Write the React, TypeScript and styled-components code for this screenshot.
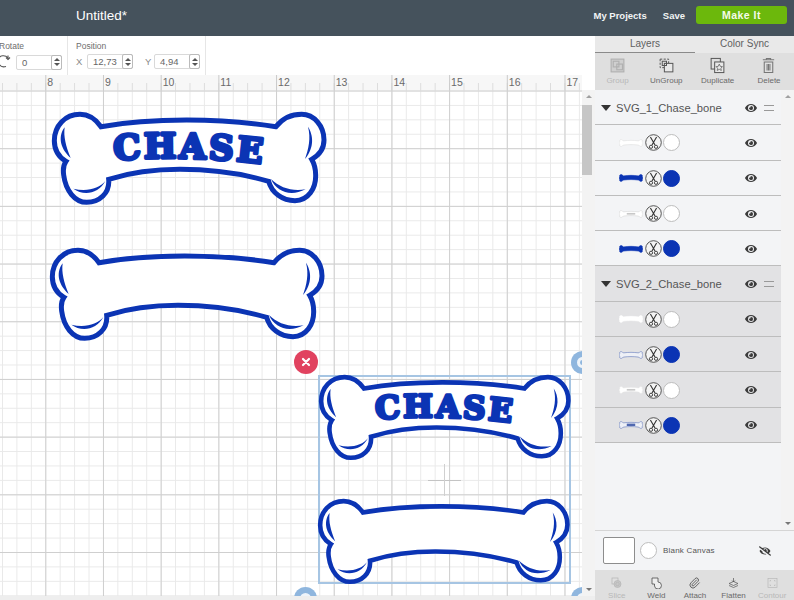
import { ReactNode } from "react"
import styled, { createGlobalStyle } from "styled-components"
import { FaEye, FaEyeSlash } from "react-icons/fa"
import { Paperclip } from "lucide-react"

const BLUE = "#0b34b4"

const GlobalStyle = createGlobalStyle`
  html, body {
    margin: 0;
    padding: 0;
    width: 794px;
    height: 600px;
    overflow: hidden;
    background: #fff;
    font-family: "Liberation Sans", Arial, sans-serif;
  }
`

const Page = styled.div`
  width: 794px;
  height: 600px;
  display: flex;
  flex-direction: column;
  overflow: hidden;
`

const TopBar = styled.header`
  height: 36px;
  flex: none;
  background: #45525c;
  display: flex;
  align-items: center;
  color: #fff;
  padding: 0 7px 0 76px;
`

const Title = styled.div`
  font-size: 13.5px;
  flex: 1;
  margin-top: -6px;
`

const TopLink = styled.a<{ $gap: number }>`
  font-size: 9.5px;
  font-weight: 700;
  color: #f2f4f5;
  margin-right: ${(p) => p.$gap}px;
  margin-top: -6px;
`

const MakeIt = styled.button`
  width: 91px;
  height: 18px;
  margin-top: -6px;
  border: 0;
  border-radius: 3px;
  background: #6cb80c;
  color: #f4fbe8;
  font: 700 10.5px "Liberation Sans", Arial, sans-serif;
  letter-spacing: 0.5px;
  padding: 0;
`

const Body = styled.div`
  flex: 1;
  display: flex;
  min-height: 0;
`

const Workspace = styled.main`
  width: 595px;
  flex: none;
  display: flex;
  flex-direction: column;
  min-width: 0;
`

const OptionBar = styled.div`
  height: 39px;
  flex: none;
  display: flex;
  background: #fff;
`

const OptionGroup = styled.div<{ $width: number; $pad: number }>`
  width: ${(p) => p.$width}px;
  box-sizing: border-box;
  padding: 5px 0 0 ${(p) => p.$pad}px;
  border-right: 1px solid #e6e6e6;
`

const OptionLabel = styled.div<{ $shift?: number }>`
  font-size: 8.5px;
  color: #6d6d6d;
  height: 12px;
  margin-left: ${(p) => p.$shift ?? 0}px;
`

const OptionRow = styled.div`
  display: flex;
  align-items: center;
  margin-top: 1px;
`

const AxisLabel = styled.span<{ $width: number }>`
  width: ${(p) => p.$width}px;
  font-size: 9.5px;
  color: #8a8a8a;
`

const NumberBox = styled.div<{ $width: number; $gap: number }>`
  width: ${(p) => p.$width}px;
  height: 15px;
  box-sizing: border-box;
  border: 1px solid #d9d9d9;
  border-radius: 2px;
  margin-right: ${(p) => p.$gap}px;
  display: flex;
  align-items: center;
  justify-content: space-between;
  padding-left: 5px;
  font-size: 9.5px;
  color: #666;
`

const Spinner = styled.div`
  width: 11px;
  height: 15px;
  flex: none;
  box-sizing: border-box;
  border: 1px solid #bbb;
  border-radius: 2px;
  margin-right: -1px;
  display: flex;
  flex-direction: column;
  align-items: center;
  justify-content: center;
  gap: 2px;
  &::before,
  &::after {
    content: "";
    border-left: 3px solid transparent;
    border-right: 3px solid transparent;
  }
  &::before {
    border-bottom: 3px solid #555;
  }
  &::after {
    border-top: 3px solid #555;
  }
`

const Ruler = styled.div`
  height: 15px;
  flex: none;
  width: 582px;
  box-sizing: border-box;
  padding-left: 45.3px;
  display: flex;
  overflow: hidden;
  background-color: #f7f7f7;
  background-image:
    linear-gradient(to right, #cacaca 1px, transparent 1px),
    linear-gradient(to right, #dcdcdc 1px, transparent 1px);
  background-size: 57.7px 100%, 14.425px 7px;
  background-position: 45.3px 0, 2px 100%;
  background-repeat: repeat-x;
`

const RulerMark = styled.span`
  width: 57.7px;
  flex: none;
  box-sizing: border-box;
  padding: 1px 0 0 2px;
  font-size: 10.5px;
  line-height: 12px;
  color: #6a6a6a;
`

const CanvasRow = styled.div`
  flex: 1;
  display: flex;
  min-height: 0;
`

const Canvas = styled.div`
  position: relative;
  width: 582px;
  overflow: hidden;
  background-color: #fff;
  background-image:
    linear-gradient(to right, #cfcfcf 1px, transparent 1px),
    linear-gradient(to bottom, #cfcfcf 1px, transparent 1px),
    linear-gradient(to right, #e9e9e9 1px, transparent 1px),
    linear-gradient(to bottom, #e9e9e9 1px, transparent 1px);
  background-size: 57.7px 57.7px, 57.7px 57.7px, 14.425px 14.425px, 14.425px 14.425px;
  background-position: 45.3px 0, 0 0.5px, 2px 0, 0 0.5px;
`

const ScrollBar = styled.div<{ $width: number }>`
  width: ${(p) => p.$width}px;
  flex: none;
  background: #f3f3f3;
  display: flex;
  flex-direction: column;
  align-items: center;
  padding: 5px 0;
  box-sizing: border-box;
`

const ScrollUp = styled.div`
  border-left: 3px solid transparent;
  border-right: 3px solid transparent;
  border-bottom: 3px solid #a0a0a0;
`

const ScrollDown = styled.div`
  border-left: 3px solid transparent;
  border-right: 3px solid transparent;
  border-top: 3px solid #777;
  margin-top: auto;
`

const ScrollThumb = styled.div`
  width: 10px;
  height: 70px;
  margin: 7px 3px 0 0;
  background: #c6c6c6;
`

const BottomScroll = styled.div`
  height: 4px;
  flex: none;
  background: #eeeeee;
`

const BoneSvg = styled.svg<{ $x: number; $y: number; $scale: number }>`
  position: absolute;
  left: ${(p) => p.$x}px;
  top: ${(p) => p.$y}px;
  width: ${(p) => 300 * p.$scale}px;
  height: ${(p) => 120 * p.$scale}px;
`

const Selection = styled.div`
  position: absolute;
  left: 318px;
  top: 285px;
  width: 253px;
  height: 209px;
  box-sizing: border-box;
  border: 2px solid #a6c5e3;
`

const CrossH = styled.div`
  position: absolute;
  left: 428px;
  top: 389.5px;
  width: 33px;
  height: 1px;
  background: #c4c4c4;
`

const CrossV = styled.div`
  position: absolute;
  left: 444px;
  top: 374px;
  width: 1px;
  height: 32px;
  background: #d0d0d0;
`

const DeleteBadge = styled.div`
  position: absolute;
  left: 294px;
  top: 260px;
  width: 24px;
  height: 24px;
  border-radius: 50%;
  background: #e1425f;
  color: #fff;
  display: flex;
  align-items: center;
  justify-content: center;
`

const Handle = styled.div<{ $x: number; $y: number }>`
  position: absolute;
  left: ${(p) => p.$x}px;
  top: ${(p) => p.$y}px;
  width: 23px;
  height: 23px;
  border-radius: 50%;
  background: #8fb6de;
  &::after {
    content: "";
    position: absolute;
    left: 6px;
    top: 6px;
    width: 5px;
    height: 5px;
    border: 3px solid #eef4fa;
    border-radius: 50%;
  }
`

const Panel = styled.aside`
  width: 199px;
  flex: none;
  display: flex;
  flex-direction: column;
  background: #f3f4f6;
`

const Tabs = styled.div`
  height: 17px;
  flex: none;
  display: flex;
  background: #e9e9e9;
  border-bottom: 1px solid #cfcfcf;
  box-sizing: content-box;
  margin-bottom: -1px;
`

const Tab = styled.div<{ $active?: boolean; $width: number }>`
  width: ${(p) => p.$width}px;
  text-align: center;
  font-size: 10px;
  line-height: 16px;
  color: #606060;
  box-sizing: border-box;
  height: 18px;
  border-bottom: 2px solid ${(p) => (p.$active ? "#8a8a8a" : "transparent")};
`

const ToolStrip = styled.div<{ $height: number; $top: number; $inset: number }>`
  height: ${(p) => p.$height}px;
  flex: none;
  display: flex;
  justify-content: space-between;
  background: #dfdfdf;
  box-sizing: border-box;
  padding: ${(p) => p.$top}px ${(p) => p.$inset}px 0 0;
  overflow: hidden;
`

const Tool = styled.div<{ $disabled?: boolean; $width: number }>`
  width: ${(p) => p.$width}px;
  display: flex;
  flex-direction: column;
  align-items: center;
  padding-top: 4px;
  font-size: 8px;
  line-height: 9px;
  color: ${(p) => (p.$disabled ? "#b8b8b8" : "#6a6a6a")};
  svg {
    display: block;
    width: 17px;
    height: 17px;
    margin-bottom: 2px;
  }
`

const ListArea = styled.div`
  flex: 1;
  display: flex;
  min-height: 0;
`

const LayerList = styled.div`
  width: 186px;
  flex: none;
`

const GroupHead = styled.div<{ $shaded?: boolean }>`
  height: 35.3px;
  box-sizing: border-box;
  display: flex;
  align-items: center;
  padding: 1px 0 0 6px;
  border-bottom: 1px solid #bdbdbd;
  background: ${(p) => (p.$shaded ? "#e2e2e4" : "#f3f4f6")};
  color: #555;
  font-size: 11.2px;
`

const Caret = styled.span`
  border-left: 5.5px solid transparent;
  border-right: 5.5px solid transparent;
  border-top: 6px solid #333;
  margin-right: 5px;
`

const GroupName = styled.span`
  flex: 1;
`

const EyeSlot = styled.span<{ $right: number }>`
  display: flex;
  color: #3c3c3c;
  font-size: 12px;
  margin-right: ${(p) => p.$right}px;
`

const Grip = styled.span`
  width: 10px;
  height: 4px;
  border-top: 1px solid #999;
  border-bottom: 1px solid #999;
  margin-right: 7px;
`

const LayerRow = styled.div<{ $shaded?: boolean }>`
  height: 35.3px;
  box-sizing: border-box;
  display: flex;
  align-items: center;
  padding: 1px 0 0 24px;
  border-bottom: 1px solid #bdbdbd;
  background: ${(p) => (p.$shaded ? "#e2e2e4" : "#f3f4f6")};
`

const Thumb = styled.svg`
  width: 24px;
  height: 12px;
  flex: none;
  margin-right: 2px;
`

const CutIcon = styled.svg`
  width: 17px;
  height: 17px;
  flex: none;
  margin-right: 1px;
`

const Swatch = styled.span<{ $color: string; $size: number }>`
  width: ${(p) => p.$size}px;
  height: ${(p) => p.$size}px;
  box-sizing: border-box;
  border-radius: 50%;
  flex: none;
  background: ${(p) => p.$color};
  border: 1px solid ${(p) => (p.$color === "#fff" ? "#bdbdbd" : p.$color)};
`

const RowEye = styled(EyeSlot)`
  margin-left: auto;
`

const BlankCanvas = styled.div`
  height: 40px;
  flex: none;
  box-sizing: border-box;
  display: flex;
  align-items: center;
  padding: 0 23px 0 8px;
  background: #f3f4f6;
  border-top: 1px solid #d5d5d5;
`

const BlankSquare = styled.div`
  width: 32px;
  height: 27px;
  box-sizing: border-box;
  background: #fff;
  border: 1px solid #8d8d8d;
  border-radius: 2px;
  margin-right: 5px;
`

const BlankLabel = styled.span`
  font-size: 8px;
  color: #555;
  margin-left: 6px;
  flex: 1;
  letter-spacing: 0.2px;
`

const BONE_PATH =
  "M183 80 C165 55 145 43 120 43 C75 43 43 78 43 122 C43 148 55 170 78 184 C70 195 69 210 71 225 C77 272 105 307 140 307 C178 307 210 280 206 238 C270 218 340 208 420 208 C520 208 610 222 686 244 C695 278 727 302 765 302 C805 302 828 265 827 225 C827 208 823 192 815 178 C838 165 852 145 852 120 C852 78 822 43 785 43 C755 43 728 55 708 80 C620 66 520 60 440 60 C350 60 260 66 183 80 Z"

const CRESCENTS = [
  "M74 82 C56 105 56 142 92 174 C78 140 70 110 74 82 Z",
  "M804 80 C820 105 824 142 795 177 C806 145 813 115 804 80 Z",
  "M100 266 C130 288 176 282 196 243 C178 266 140 276 100 266 Z",
  "M693 237 C710 276 752 291 797 268 C755 275 720 263 693 237 Z",
]

type BoneProps = { x: number; y: number; scale: number; label?: string }

const Bone = ({ x, y, scale, label }: BoneProps) => {
  const arcId = `arc-${x}-${y}`
  return (
    <BoneSvg $x={x} $y={y} $scale={scale} viewBox="0 0 900 360">
      <path d={BONE_PATH} fill="#fff" stroke={BLUE} strokeWidth={15} strokeLinejoin="miter" />
      {CRESCENTS.map((d) => (
        <path key={d} d={d} fill={BLUE} />
      ))}
      {label && (
        <>
          <path id={arcId} d="M222 181 Q440 163 672 192" fill="none" />
          <text
            fontFamily='"DejaVu Serif", serif'
            fontWeight={700}
            fontSize={103}
            letterSpacing={8}
            fill={BLUE}
            stroke={BLUE}
            strokeWidth={10}
            strokeLinejoin="round"
          >
            <textPath href={`#${arcId}`}>{label}</textPath>
          </text>
        </>
      )}
    </BoneSvg>
  )
}

const THUMB =
  "M6 3 C4 0 0 1 1 4 C0 5 0 7 1 8 C0 11 4 12 6 9 C14 8 20 8 28 9 C30 12 34 11 33 8 C34 7 34 5 33 4 C34 1 30 0 28 3 C20 2 14 2 6 3 Z"

type ThumbKind = "white" | "blue" | "cut" | "solidWhite" | "outline" | "cutWhite" | "outlineText"

const BoneThumb = ({ kind }: { kind: ThumbKind }) => {
  const fills: Record<ThumbKind, [string, string]> = {
    white: ["#fff", "#dedede"],
    blue: [BLUE, BLUE],
    cut: ["#fff", "#d4d4d4"],
    solidWhite: ["#fff", "#fff"],
    outline: ["#eef0f6", "#5870b8"],
    cutWhite: ["#fff", "#e6e6e6"],
    outlineText: ["#eef0f6", "#5870b8"],
  }
  const [fill, stroke] = fills[kind]
  return (
    <Thumb viewBox="0 0 34 12">
      <path d={THUMB} fill={fill} stroke={stroke} strokeWidth={0.8} />
      {(kind === "cut" || kind === "cutWhite") && (
        <rect x={11} y={4.5} width={12} height={2.4} fill="#c8c8c8" />
      )}
      {kind === "outlineText" && <rect x={11} y={4} width={12} height={3.4} fill="#5068b0" />}
    </Thumb>
  )
}

const ScissorIcon = () => (
  <CutIcon viewBox="0 0 17 17">
    <circle cx={8.5} cy={8.5} r={7.8} fill="#f4f4f4" stroke="#444" strokeWidth={0.9} />
    <path d="M5.4 3 L10 11 M11.6 3 L7 11" stroke="#333" strokeWidth={1.1} fill="none" />
    <circle cx={6} cy={12.8} r={1.6} fill="none" stroke="#333" strokeWidth={0.9} />
    <circle cx={11} cy={12.8} r={1.6} fill="none" stroke="#333" strokeWidth={0.9} />
  </CutIcon>
)

const Eye = ({ right }: { right: number }) => (
  <RowEye $right={right}>
    <FaEye />
  </RowEye>
)

const GroupIcon = () => (
  <svg viewBox="0 0 24 24" fill="none" stroke="#b0b0b0" strokeWidth={1.6}>
    <rect x={3} y={3} width={18} height={18} fill="#cfcfcf" />
    <rect x={6} y={6} width={8} height={8} />
    <rect x={11} y={10} width={8} height={8} />
  </svg>
)

const UngroupIcon = () => (
  <svg viewBox="0 0 24 24" fill="none" stroke="#555" strokeWidth={1.4}>
    <rect x={3} y={3} width={12} height={12} strokeDasharray="3 2" />
    <rect x={9} y={9} width={12} height={12} fill="#e8e8e8" />
    <rect x={6} y={6} width={6} height={6} />
  </svg>
)

const DuplicateIcon = () => (
  <svg viewBox="0 0 24 24" fill="none" stroke="#555" strokeWidth={1.4}>
    <rect x={3} y={2} width={13} height={15} />
    <rect x={8} y={7} width={13} height={15} fill="#e8e8e8" />
    <path d="M14.5 10 L16 13.2 L19 13.6 L16.8 15.8 L17.4 19 L14.5 17.4 L11.6 19 L12.2 15.8 L10 13.6 L13 13.2 Z" strokeWidth={1} />
  </svg>
)

const TrashIcon = () => (
  <svg viewBox="0 0 24 24" fill="none" stroke="#777" strokeWidth={1.5}>
    <path d="M4 4 H20 M9 4 V2 H15 V4" />
    <path d="M6 7 H18 V22 H6 Z" />
    <path d="M10 10 V19 M12 10 V19 M14 10 V19" />
  </svg>
)

const SliceIcon = () => (
  <svg viewBox="0 0 24 24" fill="none" stroke="#b4b4b4" strokeWidth={1.4}>
    <rect x={3} y={2} width={12} height={12} />
    <circle cx={14} cy={14} r={7} fill="#c8c8c8" />
    <circle cx={14} cy={14} r={3.5} />
  </svg>
)

const WeldIcon = () => (
  <svg viewBox="0 0 24 24" fill="none" stroke="#444" strokeWidth={1.5}>
    <path d="M3 2 H15 V10 A7 7 0 1 1 8 18 V14 H3 Z" fill="#eee" />
  </svg>
)

const FlattenIcon = () => (
  <svg viewBox="0 0 24 24" fill="none" stroke="#555" strokeWidth={1.4}>
    <path d="M12 2 V10 M9 7 L12 10 L15 7" />
    <path d="M3 13 L12 9 L21 13 L12 17 Z" />
    <path d="M3 17 L12 21 L21 17" />
  </svg>
)

const ContourIcon = () => (
  <svg viewBox="0 0 24 24" fill="none" stroke="#b8b8b8" strokeWidth={1.4}>
    <rect x={3} y={3} width={18} height={18} />
    <path d="M7 9 V7 H9 M15 7 H17 V9 M17 15 V17 H15 M9 17 H7 V15" />
  </svg>
)

const RotateIcon = () => (
  <svg width="14" height="14" viewBox="0 0 14 14" fill="none" stroke="#555" strokeWidth={1.1}>
    <path d="M2 10 A6 6 0 0 0 9 12.5 M1 5 A6 6 0 0 1 11 4 V1.5" transform="translate(-3 0)" />
    <path d="M6 3.5 L8 5.5 L10 3.5" />
  </svg>
)

type LayerItem = { thumb: ThumbKind; color: string }

const FIRST_GROUP: LayerItem[] = [
  { thumb: "white", color: "#fff" },
  { thumb: "blue", color: BLUE },
  { thumb: "cut", color: "#fff" },
  { thumb: "blue", color: BLUE },
]

const SECOND_GROUP: LayerItem[] = [
  { thumb: "solidWhite", color: "#fff" },
  { thumb: "outline", color: BLUE },
  { thumb: "cutWhite", color: "#fff" },
  { thumb: "outlineText", color: BLUE },
]

const LayerGroup = ({ name, items, shaded }: { name: string; items: LayerItem[]; shaded?: boolean }) => (
  <>
    <GroupHead $shaded={shaded}>
      <Caret />
      <GroupName>{name}</GroupName>
      <Eye right={7} />
      <Grip />
    </GroupHead>
    {items.map((item, i) => (
      <LayerRow key={i} $shaded={shaded}>
        <BoneThumb kind={item.thumb} />
        <ScissorIcon />
        <Swatch $color={item.color} $size={17} />
        <Eye right={24} />
      </LayerRow>
    ))}
  </>
)

const ToolButton = ({ label, width, disabled, children }: { label: string; width: number; disabled?: boolean; children: ReactNode }) => (
  <Tool $width={width} $disabled={disabled}>
    {children}
    {label}
  </Tool>
)

const MARKS = [8, 9, 10, 11, 12, 13, 14, 15, 16, 17]

export default function App() {
  return (
    <Page>
      <GlobalStyle />
      <TopBar>
        <Title>Untitled*</Title>
        <TopLink $gap={16}>My Projects</TopLink>
        <TopLink $gap={11}>Save</TopLink>
        <MakeIt>Make It</MakeIt>
      </TopBar>
      <Body>
        <Workspace>
          <OptionBar>
            <OptionGroup $width={68} $pad={0}>
              <OptionLabel $shift={-1}>Rotate</OptionLabel>
              <OptionRow>
                <AxisLabel $width={16}>
                  <RotateIcon />
                </AxisLabel>
                <NumberBox $width={46} $gap={0}>
                  0<Spinner />
                </NumberBox>
              </OptionRow>
            </OptionGroup>
            <OptionGroup $width={138} $pad={8}>
              <OptionLabel>Position</OptionLabel>
              <OptionRow>
                <AxisLabel $width={11}>X</AxisLabel>
                <NumberBox $width={46} $gap={12}>
                  12,73
                  <Spinner />
                </NumberBox>
                <AxisLabel $width={9}>Y</AxisLabel>
                <NumberBox $width={46} $gap={0}>
                  4,94
                  <Spinner />
                </NumberBox>
              </OptionRow>
            </OptionGroup>
          </OptionBar>
          <Ruler>
            {MARKS.map((m) => (
              <RulerMark key={m}>{m}</RulerMark>
            ))}
          </Ruler>
          <CanvasRow>
            <Canvas>
              <Bone x={40} y={10} scale={1} label="CHASE" />
              <Bone x={38.3} y={146} scale={1} />
              <Selection />
              <Bone x={307.7} y={273.7} scale={0.917} label="CHASE" />
              <Bone x={307} y={397.7} scale={0.917} />
              <CrossH />
              <CrossV />
              <DeleteBadge>
                <svg width="10" height="10" viewBox="0 0 10 10" stroke="#fff" strokeWidth={2.2} strokeLinecap="round">
                  <path d="M2 2 L8 8 M8 2 L2 8" />
                </svg>
              </DeleteBadge>
              <Handle $x={571} $y={261} />
              <Handle $x={294} $y={497} />
              <Handle $x={571} $y={497} />
            </Canvas>
            <ScrollBar $width={13}>
              <ScrollUp />
              <ScrollThumb />
              <ScrollDown />
            </ScrollBar>
          </CanvasRow>
          <BottomScroll />
        </Workspace>
        <Panel>
          <Tabs>
            <Tab $active $width={100}>Layers</Tab>
            <Tab $width={99}>Color Sync</Tab>
          </Tabs>
          <ToolStrip $height={37} $top={0} $inset={0}>
            <ToolButton label="Group" width={45} disabled>
              <GroupIcon />
            </ToolButton>
            <ToolButton label="UnGroup" width={50}>
              <UngroupIcon />
            </ToolButton>
            <ToolButton label="Duplicate" width={50}>
              <DuplicateIcon />
            </ToolButton>
            <ToolButton label="Delete" width={50}>
              <TrashIcon />
            </ToolButton>
          </ToolStrip>
          <ListArea>
            <LayerList>
              <LayerGroup name="SVG_1_Chase_bone" items={FIRST_GROUP} />
              <LayerGroup name="SVG_2_Chase_bone" items={SECOND_GROUP} shaded />
            </LayerList>
            <ScrollBar $width={13}>
              <ScrollUp />
              <ScrollDown />
            </ScrollBar>
          </ListArea>
          <BlankCanvas>
            <BlankSquare />
            <Swatch $color="#fff" $size={17} />
            <BlankLabel>Blank Canvas</BlankLabel>
            <EyeSlot $right={0}>
              <FaEyeSlash />
            </EyeSlot>
          </BlankCanvas>
          <ToolStrip $height={30} $top={3} $inset={1}>
            <ToolButton label="Slice" width={44} disabled>
              <SliceIcon />
            </ToolButton>
            <ToolButton label="Weld" width={36}>
              <WeldIcon />
            </ToolButton>
            <ToolButton label="Attach" width={42}>
              <Paperclip strokeWidth={1.6} color="#444" />
            </ToolButton>
            <ToolButton label="Flatten" width={36}>
              <FlattenIcon />
            </ToolButton>
            <ToolButton label="Contour" width={42} disabled>
              <ContourIcon />
            </ToolButton>
          </ToolStrip>
        </Panel>
      </Body>
    </Page>
  )
}
